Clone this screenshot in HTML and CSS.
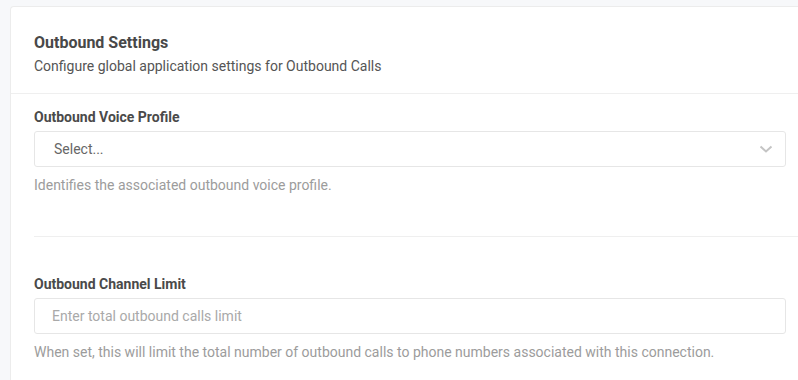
FILE: index.html
```html
<!DOCTYPE html>
<html>

<head>
	<meta charset="utf-8">
	<title>Outbound Settings</title>
	<link rel="stylesheet" href="styles.css">
</head>

<body>

	<main class="kort">
		<header class="kortHoved">
			<h2 class="overskrift">Outbound Settings</h2>
			<p class="underoverskrift">Configure global application settings for Outbound Calls</p>
		</header>

		<section class="felt">
			<label class="etiket">Outbound Voice Profile</label>
			<div class="vaelger">
				<span>Select...</span>
				<svg class="pil" width="14" height="9" viewBox="0 0 14 9">
					<path d="M1.5 1.5 L7 6.5 L12.5 1.5" fill="none" stroke="#c4c4c4" stroke-width="2" />
				</svg>
			</div>
			<p class="hjaelp">Identifies the associated outbound voice profile.</p>
		</section>

		<section class="felt sidste">
			<label class="etiket">Outbound Channel Limit</label>
			<input class="indtast" type="text" placeholder="Enter total outbound calls limit">
			<p class="hjaelp">When set, this will limit the total number of outbound calls to phone numbers associated with this connection.</p>
		</section>
	</main>

</body>

</html>
```

FILE: styles.css
```css
body {
	background-color: #f7f8fa;
	margin: 0;
	font-family: Roboto, "Liberation Sans", sans-serif;
	overflow: hidden;
	height: 380px;
}

.kort {
	box-sizing: border-box;
	background-color: #fff;
	border: 1px solid #ececec;
	border-bottom: none;
	border-radius: 4px 4px 0 0;
	margin: 6px 0 0 10px;
	width: 800px;
	height: 374px;
	overflow: hidden;
}

.kortHoved {
	padding: 26px 23px 17px;
	border-bottom: 1px solid #efefef;
}

.overskrift {
	margin: 0;
	font-size: 16px;
	line-height: 20px;
	font-weight: bold;
	color: #484848;
}

.underoverskrift {
	margin: 3px 0 0;
	font-size: 14px;
	line-height: 20px;
	color: #555;
}

.felt {
	margin: 0 0 0 23px;
	padding: 13px 0 41px;
	border-bottom: 1px solid #efefef;
}

.felt.sidste {
	padding-top: 37px;
	border-bottom: none;
}

.etiket {
	display: block;
	font-size: 14px;
	line-height: 20px;
	font-weight: bold;
	color: #4a4a4a;
}

.vaelger,
.indtast {
	box-sizing: border-box;
	display: flex;
	align-items: center;
	justify-content: space-between;
	width: 752px;
	height: 36px;
	margin-top: 4px;
	border: 1px solid #e6e6e6;
	border-radius: 3px;
	font-family: Roboto, "Liberation Sans", sans-serif;
	font-size: 14px;
	color: #666;
}

.vaelger {
	padding: 0 12px 0 19px;
}

.indtast {
	padding: 0 17px;
	outline: none;
}

.indtast::placeholder {
	color: #a9a9a9;
}

.hjaelp {
	margin: 8px 0 0;
	font-size: 14px;
	line-height: 20px;
	color: #9c9c9c;
}
```
